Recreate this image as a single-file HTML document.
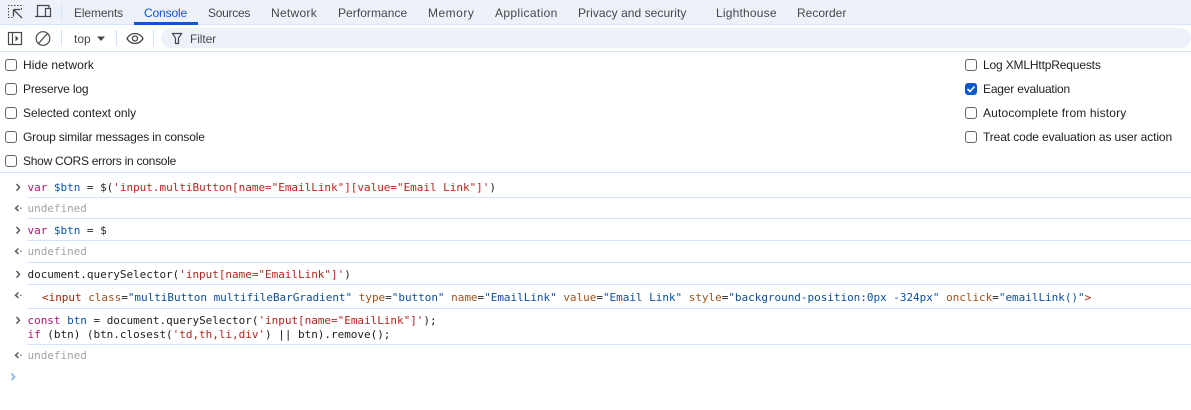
<!DOCTYPE html>
<html><head><meta charset="utf-8"><style>
html,body{margin:0;padding:0;background:#fff;width:1191px;height:410px;overflow:hidden}
body{position:relative;font-family:"Liberation Sans",sans-serif;font-size:12px;color:#1f1f1f}
.a{position:absolute;white-space:pre}
.tab{position:absolute;top:6px;line-height:14px;font-size:12px;color:#474747;white-space:pre}
.lb{position:absolute;line-height:14px;font-size:12px;color:#1f1f1f;white-space:pre}
.cb{position:absolute;width:10px;height:10px;border:1px solid #5f6368;border-radius:3px;background:#fff}
.ln{position:absolute;height:1px;background:#d3e3fd}
.m{position:absolute;left:27.5px;font-family:"DejaVu Sans Mono",monospace;font-size:11px;letter-spacing:-.025px;line-height:14px;white-space:pre;color:#1f1f1f}
.r{color:#b3261e}.k{color:#a8166f}.v{color:#0b57a8}.u{color:#a3a3a3}.t{color:#a1260d}.at{color:#a0521a}.av{color:#0b4f9e}
</style></head><body>
<div class="a" style="left:0;top:0;width:1191px;height:24px;background:#edf2fa"></div>
<div class="a" style="left:0;top:24px;width:1191px;height:1px;background:#d3e3fd"></div>
<div class="a" style="left:0;top:51px;width:1191px;height:1px;background:#d3e3fd"></div>
<div class="a" style="left:161px;top:28px;width:1030px;height:20px;border-radius:10px;background:#edf2fa"></div>
<svg class="a" style="left:0;top:0" width="190" height="52" fill="none">
<path d="M8 5.500h1.500M11 5.500h1.500M14 5.500h1.500M17 5.500h1.500M20 5.500h1.500M8.500 8v1.500M8.500 11v1.500M8.500 14v1.500M21.500 8v1.500M8 17.500h1.500M11 17.500h1.500" stroke="#474747"/>
<path d="M13.500 9.500h7M13.500 9.500v7M14 10l8 8" stroke="#474747" stroke-width="1.300"/>
<path d="M37.500 16V5.500H49V8M35 16.500h10" stroke="#474747" stroke-width="1.200"/><rect x="45.500" y="8.500" width="5" height="8" stroke="#474747" stroke-width="1.200"/>
<path d="M61.500 4v16" stroke="#d3e3fd"/>
<rect x="8.500" y="32.500" width="13" height="12" stroke="#474747" stroke-width="1.200"/><path d="M12.500 32.500v12" stroke="#474747" stroke-width="1.200"/><path d="M15.500 35.500l3 3-3 3z" fill="#474747"/>
<circle cx="43" cy="38.500" r="6.800" stroke="#474747" stroke-width="1.200"/><path d="M38.500 43.500l9-10" stroke="#474747" stroke-width="1.200"/>
<path d="M61.500 30v16M116.500 30v16M153.500 30v16" stroke="#d3e3fd"/>
<path d="M97 36.500h8l-4 4.500z" fill="#474747"/>
<path d="M127 38.500c2-3.500 5-5 8-5s6 1.500 8 5c-2 3.500-5 5-8 5s-6-1.500-8-5z" stroke="#474747" stroke-width="1.300"/><circle cx="135" cy="38.500" r="2.500" stroke="#474747" stroke-width="1.300"/>
<path d="M172.500 33.500h9L178.500 38v5.500h-3V38z" stroke="#474747" stroke-width="1.200"/>
</svg>
<div class="a" style="left:134px;top:22px;width:64px;height:3px;background:#0b57d0"></div>
<div class="tab" style="left:74px;letter-spacing:-.12px">Elements</div>
<div class="tab" style="left:144px;color:#0b57d0;letter-spacing:-.14px">Console</div>
<div class="tab" style="left:208px;letter-spacing:-.28px">Sources</div>
<div class="tab" style="left:271px;letter-spacing:.28px">Network</div>
<div class="tab" style="left:338px;letter-spacing:.05px">Performance</div>
<div class="tab" style="left:428px;letter-spacing:.5px">Memory</div>
<div class="tab" style="left:495px;letter-spacing:.36px">Application</div>
<div class="tab" style="left:578px;letter-spacing:.05px">Privacy and security</div>
<div class="tab" style="left:716px;letter-spacing:.2px">Lighthouse</div>
<div class="tab" style="left:797px">Recorder</div>
<div class="lb" style="left:74px;top:32px;color:#474747">top</div>
<div class="lb" style="left:190px;top:32px;color:#474747;letter-spacing:-.1px">Filter</div>

<div class="cb" style="left:5px;top:59px"></div><div class="lb" style="left:23px;top:58px;letter-spacing:.08px">Hide network</div>
<div class="cb" style="left:5px;top:83px"></div><div class="lb" style="left:23px;top:82px;letter-spacing:-.17px">Preserve log</div>
<div class="cb" style="left:5px;top:107px"></div><div class="lb" style="left:23px;top:106px;letter-spacing:-.05px">Selected context only</div>
<div class="cb" style="left:5px;top:131px"></div><div class="lb" style="left:23px;top:130px;letter-spacing:-.15px">Group similar messages in console</div>
<div class="cb" style="left:5px;top:155px"></div><div class="lb" style="left:23px;top:154px;letter-spacing:-.26px">Show CORS errors in console</div>

<div class="cb" style="left:965px;top:59px"></div><div class="lb" style="left:983px;top:58px;letter-spacing:-.16px">Log XMLHttpRequests</div>
<div class="cb" style="left:965px;top:83px;background:#0b57d0;border-color:#0b57d0"></div>
<svg class="a" style="left:965px;top:83px" width="12" height="12" fill="none"><path d="M2.500 6l2.500 2.500 4.500-5" stroke="#fff" stroke-width="1.600"/></svg>
<div class="lb" style="left:983px;top:82px;letter-spacing:-.19px">Eager evaluation</div>
<div class="cb" style="left:965px;top:107px"></div><div class="lb" style="left:983px;top:106px;letter-spacing:.16px">Autocomplete from history</div>
<div class="cb" style="left:965px;top:131px"></div><div class="lb" style="left:983px;top:130px;letter-spacing:-.11px">Treat code evaluation as user action</div>

<div class="ln" style="left:0;top:172px;width:1191px"></div>
<div class="ln" style="left:27px;top:197px;width:1164px"></div>
<div class="ln" style="left:27px;top:218px;width:1164px"></div>
<div class="ln" style="left:27px;top:240px;width:1164px"></div>
<div class="ln" style="left:27px;top:262px;width:1164px"></div>
<div class="ln" style="left:27px;top:284px;width:1164px"></div>
<div class="ln" style="left:27px;top:308px;width:1164px"></div>
<div class="ln" style="left:27px;top:344px;width:1164px"></div>

<svg class="a" style="left:0;top:170px" width="27" height="220" fill="none" stroke="#5a5a5a" stroke-width="1.500">
<path d="M16.500 14l3 3.300-3 3.300M16.500 57l3 3.300-3 3.300M16.500 101l3 3.300-3 3.300M16.500 147l3 3.300-3 3.300"/>
<path d="M18.500 35.500l-3 2.700 3 2.700M18.500 78.500l-3 2.700 3 2.700M18.500 122.500l-3 2.700 3 2.700M18.500 182.500l-3 2.700 3 2.700"/>
<path d="M20 38.200h1.500M20 81.200h1.500M20 125.200h1.500M20 185.200h1.500" stroke-width="1.200"/>
<path d="M11.500 203.500l3 3.300-3 3.300" stroke="#7fadee" stroke-width="1.600"/>
</svg>

<div class="m" style="top:181px"><span class="k">var</span> <span class="v">$btn</span> = $(<span class="r">'input.multiButton[name="EmailLink"][value="Email Link"]'</span>)</div>
<div class="m u" style="top:202px">undefined</div>
<div class="m" style="top:224px"><span class="k">var</span> <span class="v">$btn</span> = $</div>
<div class="m u" style="top:245px">undefined</div>
<div class="m" style="top:268px">document.querySelector(<span class="r">'input[name="EmailLink"]'</span>)</div>
<div class="m" style="top:291px;left:42px"><span class="t">&lt;input</span> <span class="at">class</span>=<span class="av">"multiButton multifileBarGradient"</span> <span class="at">type</span>=<span class="av">"button"</span> <span class="at">name</span>=<span class="av">"EmailLink"</span> <span class="at">value</span>=<span class="av">"Email Link"</span> <span class="at">style</span>=<span class="av">"background-position:0px -324px"</span> <span class="at">onclick</span>=<span class="av">"emailLink()"</span><span class="t">&gt;</span></div>
<div class="m" style="top:314px"><span class="k">const</span> <span class="v">btn</span> = document.querySelector(<span class="r">'input[name="EmailLink"]'</span>);
<span class="k">if</span> (btn) (btn.closest(<span class="r">'td,th,li,div'</span>) || btn).remove();</div>
<div class="m u" style="top:349px">undefined</div>
</body></html>
